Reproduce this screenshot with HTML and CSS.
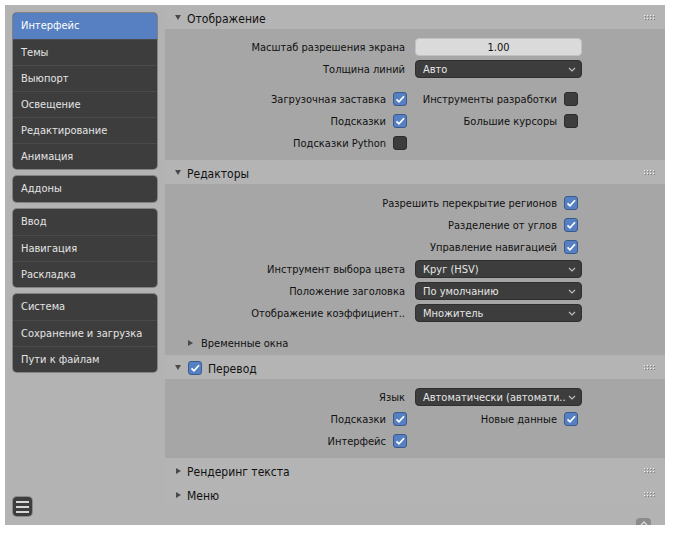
FILE: index.html
```html
<!DOCTYPE html>
<html lang="ru">
<head>
<meta charset="utf-8">
<title>Настройки</title>
<link rel="stylesheet" href="styles.css">
</head>
<body>
<div class="window">
  <aside class="sidebar">
    <div class="nav-group">
      <div class="nav-item active">Интерфейс</div>
      <div class="nav-item">Темы</div>
      <div class="nav-item">Выюпорт</div>
      <div class="nav-item">Освещение</div>
      <div class="nav-item">Редактирование</div>
      <div class="nav-item">Анимация</div>
    </div>
    <div class="nav-group">
      <div class="nav-item">Аддоны</div>
    </div>
    <div class="nav-group">
      <div class="nav-item">Ввод</div>
      <div class="nav-item">Навигация</div>
      <div class="nav-item">Раскладка</div>
    </div>
    <div class="nav-group">
      <div class="nav-item">Система</div>
      <div class="nav-item">Сохранение и загрузка</div>
      <div class="nav-item">Пути к файлам</div>
    </div>
    <div class="menu-btn"><span></span><span></span><span></span></div>
  </aside>

  <main class="region">
    <section class="panel">
      <div class="panel-header first">
        <span class="tri down"></span>
        <span class="title">Отображение</span>
        <svg class="grip" width="12" height="6" viewBox="0 0 12 6"><g fill="#f2f2f2"><rect x="0" y="0" width="1" height="1"/><rect x="3" y="0" width="1" height="1"/><rect x="6" y="0" width="1" height="1"/><rect x="9" y="0" width="1" height="1"/><rect x="0" y="3" width="1" height="1"/><rect x="3" y="3" width="1" height="1"/><rect x="6" y="3" width="1" height="1"/><rect x="9" y="3" width="1" height="1"/></g><g fill="#7a7a7a"><rect x="1" y="1" width="1" height="1"/><rect x="4" y="1" width="1" height="1"/><rect x="7" y="1" width="1" height="1"/><rect x="10" y="1" width="1" height="1"/><rect x="1" y="4" width="1" height="1"/><rect x="4" y="4" width="1" height="1"/><rect x="7" y="4" width="1" height="1"/><rect x="10" y="4" width="1" height="1"/></g></svg>
      </div>
      <div class="panel-body body-1">
        <div class="row">
          <div class="label">Масштаб разрешения экрана</div>
          <div class="field num">1.00</div>
        </div>
        <div class="row">
          <div class="label">Толщина линий</div>
          <div class="field menu"><span>Авто</span><svg class="chev" width="8" height="5" viewBox="0 0 8 5"><polyline points="1,1 4,4 7,1" fill="none" stroke="#bdbdbd" stroke-width="1.2"/></svg></div>
        </div>
        <div class="row gap-before">
          <div class="check-cell"><span>Загрузочная заставка</span><span class="cb on"><svg width="12" height="12" viewBox="0 0 12 12"><polyline points="2.5,6.3 5,8.8 10,3.3" fill="none" stroke="#fff" stroke-width="1.7"/></svg></span></div>
          <div class="check-cell right"><span>Инструменты разработки</span><span class="cb"></span></div>
        </div>
        <div class="row">
          <div class="check-cell"><span>Подсказки</span><span class="cb on"><svg width="12" height="12" viewBox="0 0 12 12"><polyline points="2.5,6.3 5,8.8 10,3.3" fill="none" stroke="#fff" stroke-width="1.7"/></svg></span></div>
          <div class="check-cell right"><span>Большие курсоры</span><span class="cb"></span></div>
        </div>
        <div class="row">
          <div class="check-cell"><span>Подсказки Python</span><span class="cb"></span></div>
        </div>
      </div>
    </section>

    <section class="panel">
      <div class="panel-header">
        <span class="tri down"></span>
        <span class="title">Редакторы</span>
        <svg class="grip" width="12" height="6" viewBox="0 0 12 6"><g fill="#f2f2f2"><rect x="0" y="0" width="1" height="1"/><rect x="3" y="0" width="1" height="1"/><rect x="6" y="0" width="1" height="1"/><rect x="9" y="0" width="1" height="1"/><rect x="0" y="3" width="1" height="1"/><rect x="3" y="3" width="1" height="1"/><rect x="6" y="3" width="1" height="1"/><rect x="9" y="3" width="1" height="1"/></g><g fill="#7a7a7a"><rect x="1" y="1" width="1" height="1"/><rect x="4" y="1" width="1" height="1"/><rect x="7" y="1" width="1" height="1"/><rect x="10" y="1" width="1" height="1"/><rect x="1" y="4" width="1" height="1"/><rect x="4" y="4" width="1" height="1"/><rect x="7" y="4" width="1" height="1"/><rect x="10" y="4" width="1" height="1"/></g></svg>
      </div>
      <div class="panel-body body-2">
        <div class="row">
          <div class="check-cell wide"><span>Разрешить перекрытие регионов</span><span class="cb on"><svg width="12" height="12" viewBox="0 0 12 12"><polyline points="2.5,6.3 5,8.8 10,3.3" fill="none" stroke="#fff" stroke-width="1.7"/></svg></span></div>
        </div>
        <div class="row">
          <div class="check-cell wide"><span>Разделение от углов</span><span class="cb on"><svg width="12" height="12" viewBox="0 0 12 12"><polyline points="2.5,6.3 5,8.8 10,3.3" fill="none" stroke="#fff" stroke-width="1.7"/></svg></span></div>
        </div>
        <div class="row">
          <div class="check-cell wide"><span>Управление навигацией</span><span class="cb on"><svg width="12" height="12" viewBox="0 0 12 12"><polyline points="2.5,6.3 5,8.8 10,3.3" fill="none" stroke="#fff" stroke-width="1.7"/></svg></span></div>
        </div>
        <div class="row">
          <div class="label">Инструмент выбора цвета</div>
          <div class="field menu"><span>Круг (HSV)</span><svg class="chev" width="8" height="5" viewBox="0 0 8 5"><polyline points="1,1 4,4 7,1" fill="none" stroke="#bdbdbd" stroke-width="1.2"/></svg></div>
        </div>
        <div class="row">
          <div class="label">Положение заголовка</div>
          <div class="field menu"><span>По умолчанию</span><svg class="chev" width="8" height="5" viewBox="0 0 8 5"><polyline points="1,1 4,4 7,1" fill="none" stroke="#bdbdbd" stroke-width="1.2"/></svg></div>
        </div>
        <div class="row">
          <div class="label">Отображение коэффициент..</div>
          <div class="field menu"><span>Множитель</span><svg class="chev" width="8" height="5" viewBox="0 0 8 5"><polyline points="1,1 4,4 7,1" fill="none" stroke="#bdbdbd" stroke-width="1.2"/></svg></div>
        </div>
        <div class="subpanel">
          <span class="tri right"></span>
          <span>Временные окна</span>
        </div>
      </div>
    </section>

    <section class="panel">
      <div class="panel-header">
        <span class="tri down"></span>
        <span class="cb on head-cb"><svg width="12" height="12" viewBox="0 0 12 12"><polyline points="2.5,6.3 5,8.8 10,3.3" fill="none" stroke="#fff" stroke-width="1.7"/></svg></span>
        <span class="title">Перевод</span>
        <svg class="grip" width="12" height="6" viewBox="0 0 12 6"><g fill="#f2f2f2"><rect x="0" y="0" width="1" height="1"/><rect x="3" y="0" width="1" height="1"/><rect x="6" y="0" width="1" height="1"/><rect x="9" y="0" width="1" height="1"/><rect x="0" y="3" width="1" height="1"/><rect x="3" y="3" width="1" height="1"/><rect x="6" y="3" width="1" height="1"/><rect x="9" y="3" width="1" height="1"/></g><g fill="#7a7a7a"><rect x="1" y="1" width="1" height="1"/><rect x="4" y="1" width="1" height="1"/><rect x="7" y="1" width="1" height="1"/><rect x="10" y="1" width="1" height="1"/><rect x="1" y="4" width="1" height="1"/><rect x="4" y="4" width="1" height="1"/><rect x="7" y="4" width="1" height="1"/><rect x="10" y="4" width="1" height="1"/></g></svg>
      </div>
      <div class="panel-body body-3">
        <div class="row">
          <div class="label">Язык</div>
          <div class="field menu"><span>Автоматически (автомати..</span><svg class="chev" width="8" height="5" viewBox="0 0 8 5"><polyline points="1,1 4,4 7,1" fill="none" stroke="#bdbdbd" stroke-width="1.2"/></svg></div>
        </div>
        <div class="row">
          <div class="check-cell"><span>Подсказки</span><span class="cb on"><svg width="12" height="12" viewBox="0 0 12 12"><polyline points="2.5,6.3 5,8.8 10,3.3" fill="none" stroke="#fff" stroke-width="1.7"/></svg></span></div>
          <div class="check-cell right"><span>Новые данные</span><span class="cb on"><svg width="12" height="12" viewBox="0 0 12 12"><polyline points="2.5,6.3 5,8.8 10,3.3" fill="none" stroke="#fff" stroke-width="1.7"/></svg></span></div>
        </div>
        <div class="row">
          <div class="check-cell"><span>Интерфейс</span><span class="cb on"><svg width="12" height="12" viewBox="0 0 12 12"><polyline points="2.5,6.3 5,8.8 10,3.3" fill="none" stroke="#fff" stroke-width="1.7"/></svg></span></div>
        </div>
      </div>
    </section>

    <section class="panel">
      <div class="panel-header">
        <span class="tri right"></span>
        <span class="title">Рендеринг текста</span>
        <svg class="grip" width="12" height="6" viewBox="0 0 12 6"><g fill="#f2f2f2"><rect x="0" y="0" width="1" height="1"/><rect x="3" y="0" width="1" height="1"/><rect x="6" y="0" width="1" height="1"/><rect x="9" y="0" width="1" height="1"/><rect x="0" y="3" width="1" height="1"/><rect x="3" y="3" width="1" height="1"/><rect x="6" y="3" width="1" height="1"/><rect x="9" y="3" width="1" height="1"/></g><g fill="#7a7a7a"><rect x="1" y="1" width="1" height="1"/><rect x="4" y="1" width="1" height="1"/><rect x="7" y="1" width="1" height="1"/><rect x="10" y="1" width="1" height="1"/><rect x="1" y="4" width="1" height="1"/><rect x="4" y="4" width="1" height="1"/><rect x="7" y="4" width="1" height="1"/><rect x="10" y="4" width="1" height="1"/></g></svg>
      </div>
    </section>

    <section class="panel">
      <div class="panel-header">
        <span class="tri right"></span>
        <span class="title">Меню</span>
        <svg class="grip" width="12" height="6" viewBox="0 0 12 6"><g fill="#f2f2f2"><rect x="0" y="0" width="1" height="1"/><rect x="3" y="0" width="1" height="1"/><rect x="6" y="0" width="1" height="1"/><rect x="9" y="0" width="1" height="1"/><rect x="0" y="3" width="1" height="1"/><rect x="3" y="3" width="1" height="1"/><rect x="6" y="3" width="1" height="1"/><rect x="9" y="3" width="1" height="1"/></g><g fill="#7a7a7a"><rect x="1" y="1" width="1" height="1"/><rect x="4" y="1" width="1" height="1"/><rect x="7" y="1" width="1" height="1"/><rect x="10" y="1" width="1" height="1"/><rect x="1" y="4" width="1" height="1"/><rect x="4" y="4" width="1" height="1"/><rect x="7" y="4" width="1" height="1"/><rect x="10" y="4" width="1" height="1"/></g></svg>
      </div>
    </section>
  </main>

  <div class="scroll-up"><svg width="8" height="5" viewBox="0 0 8 5"><polyline points="1,4 4,1 7,4" fill="none" stroke="#d8d8d8" stroke-width="1.4"/></svg></div>
</div>
</body>
</html>
```

FILE: styles.css
```css
html, body {
  margin: 0;
  padding: 0;
  background: #ffffff;
}

body {
  font-family: "DejaVu Sans Condensed", "DejaVu Sans", sans-serif;
  font-stretch: condensed;
  font-size: 11px;
  color: #111111;
}

.window {
  margin: 5px;
  width: 660px;
  height: 520px;
  display: flex;
  background: #b3b3b3;
  position: relative;
  overflow: hidden;
}

/* ---------- sidebar ---------- */
.sidebar {
  width: 160px;
  flex: 0 0 160px;
  box-sizing: border-box;
  padding: 8px 8px 9px 8px;
  display: flex;
  flex-direction: column;
  gap: 7px;
}

.nav-group {
  background: #3d3d3d;
  border-radius: 4px;
  overflow: hidden;
  box-shadow: 0 0 0 1px rgba(40, 40, 40, 0.35);
}

.nav-item {
  height: 26px;
  line-height: 26px;
  box-sizing: border-box;
  padding-left: 8px;
  color: #e4e4e4;
  font-size: 11px;
  border-top: 1px solid #4a4a4a;
  white-space: nowrap;
}

.nav-item:first-child {
  border-top: none;
}

.nav-item.active {
  background: #5680c2;
  color: #ffffff;
}

.menu-btn {
  margin-top: auto;
  width: 19px;
  height: 19px;
  box-sizing: border-box;
  background: #3d3d3d;
  border-radius: 4px;
  display: flex;
  flex-direction: column;
  justify-content: center;
  align-items: center;
  gap: 3px;
  box-shadow: 0 0 0 1px rgba(40, 40, 40, 0.3);
}

.menu-btn span {
  display: block;
  width: 13px;
  height: 2px;
  background: #d6d6d6;
}

/* ---------- main region ---------- */
.region {
  flex: 1;
  width: 500px;
  display: flex;
  flex-direction: column;
}

.panel + .panel {
  margin-top: 1px;
}

.panel-header {
  height: 23px;
  box-sizing: border-box;
  display: flex;
  align-items: center;
  padding: 0 9px 0 10px;
  background: #b4b4b4;
  font-size: 12px;
  color: #111111;
}

.panel-header.first {
  height: 24px;
  padding-top: 1px;
}

.panel-header .title {
  margin-left: 6px;
  padding-top: 2px;
}

.panel-header .grip {
  margin-left: auto;
  display: block;
}

.head-cb {
  margin-left: 7px;
}

.tri {
  display: inline-block;
  width: 0;
  height: 0;
  flex: 0 0 auto;
}

.tri.down {
  border-left: 3px solid transparent;
  border-right: 3px solid transparent;
  border-top: 5px solid #4a4a4a;
}

.tri.right {
  border-top: 3px solid transparent;
  border-bottom: 3px solid transparent;
  border-left: 5px solid #4a4a4a;
  margin-left: 1px;
}

.panel-body {
  background: #a6a6a6;
}

.body-1 {
  padding: 7px 0 6px 0;
}

.body-2 {
  padding: 8px 0 1px 0;
}

.body-3 {
  padding: 7px 0 6px 0;
}

.row {
  display: grid;
  grid-template-columns: 242px 167px 75px;
  column-gap: 8px;
  height: 22px;
  align-items: center;
}

.row.gap-before {
  margin-top: 8px;
}

.label {
  text-align: right;
  padding-right: 2px;
  white-space: nowrap;
}

.field {
  height: 18px;
  box-sizing: border-box;
  border-radius: 4px;
  display: flex;
  align-items: center;
  font-size: 11px;
}

.field.num {
  background: #dadada;
  border: 1px solid #c2c2c2;
  justify-content: center;
  color: #111111;
}

.field.menu {
  background: #3d3d3d;
  border: 1px solid #2f2f2f;
  color: #e6e6e6;
  padding: 0 5px 0 7px;
  justify-content: space-between;
  white-space: nowrap;
}

.chev {
  display: block;
  flex: 0 0 auto;
}

.check-cell {
  display: flex;
  justify-content: flex-end;
  align-items: center;
  gap: 7px;
  white-space: nowrap;
}

.check-cell.right {
  padding-right: 4px;
}

.check-cell.wide {
  grid-column: 1 / 3;
  padding-right: 4px;
}

.cb {
  width: 14px;
  height: 14px;
  box-sizing: border-box;
  border-radius: 3px;
  background: #3d3d3d;
  border: 1px solid #2c2c2c;
  display: inline-flex;
  align-items: center;
  justify-content: center;
  flex: 0 0 auto;
}

.cb.on {
  background: #5680c2;
  border-color: #3b5a8c;
}

.cb svg {
  display: block;
}

.subpanel {
  margin-top: 8px;
  height: 22px;
  display: flex;
  align-items: center;
  padding-left: 23px;
  gap: 8px;
  font-size: 11px;
}

.subpanel .tri.right {
  margin-left: 0;
}

.scroll-up {
  position: absolute;
  left: 631px;
  top: 513px;
  width: 15px;
  height: 14px;
  border-radius: 4px;
  background: #8c8c8c;
  display: flex;
  justify-content: center;
  padding-top: 3px;
  box-sizing: border-box;
}

.scroll-up svg {
  display: block;
}
```
